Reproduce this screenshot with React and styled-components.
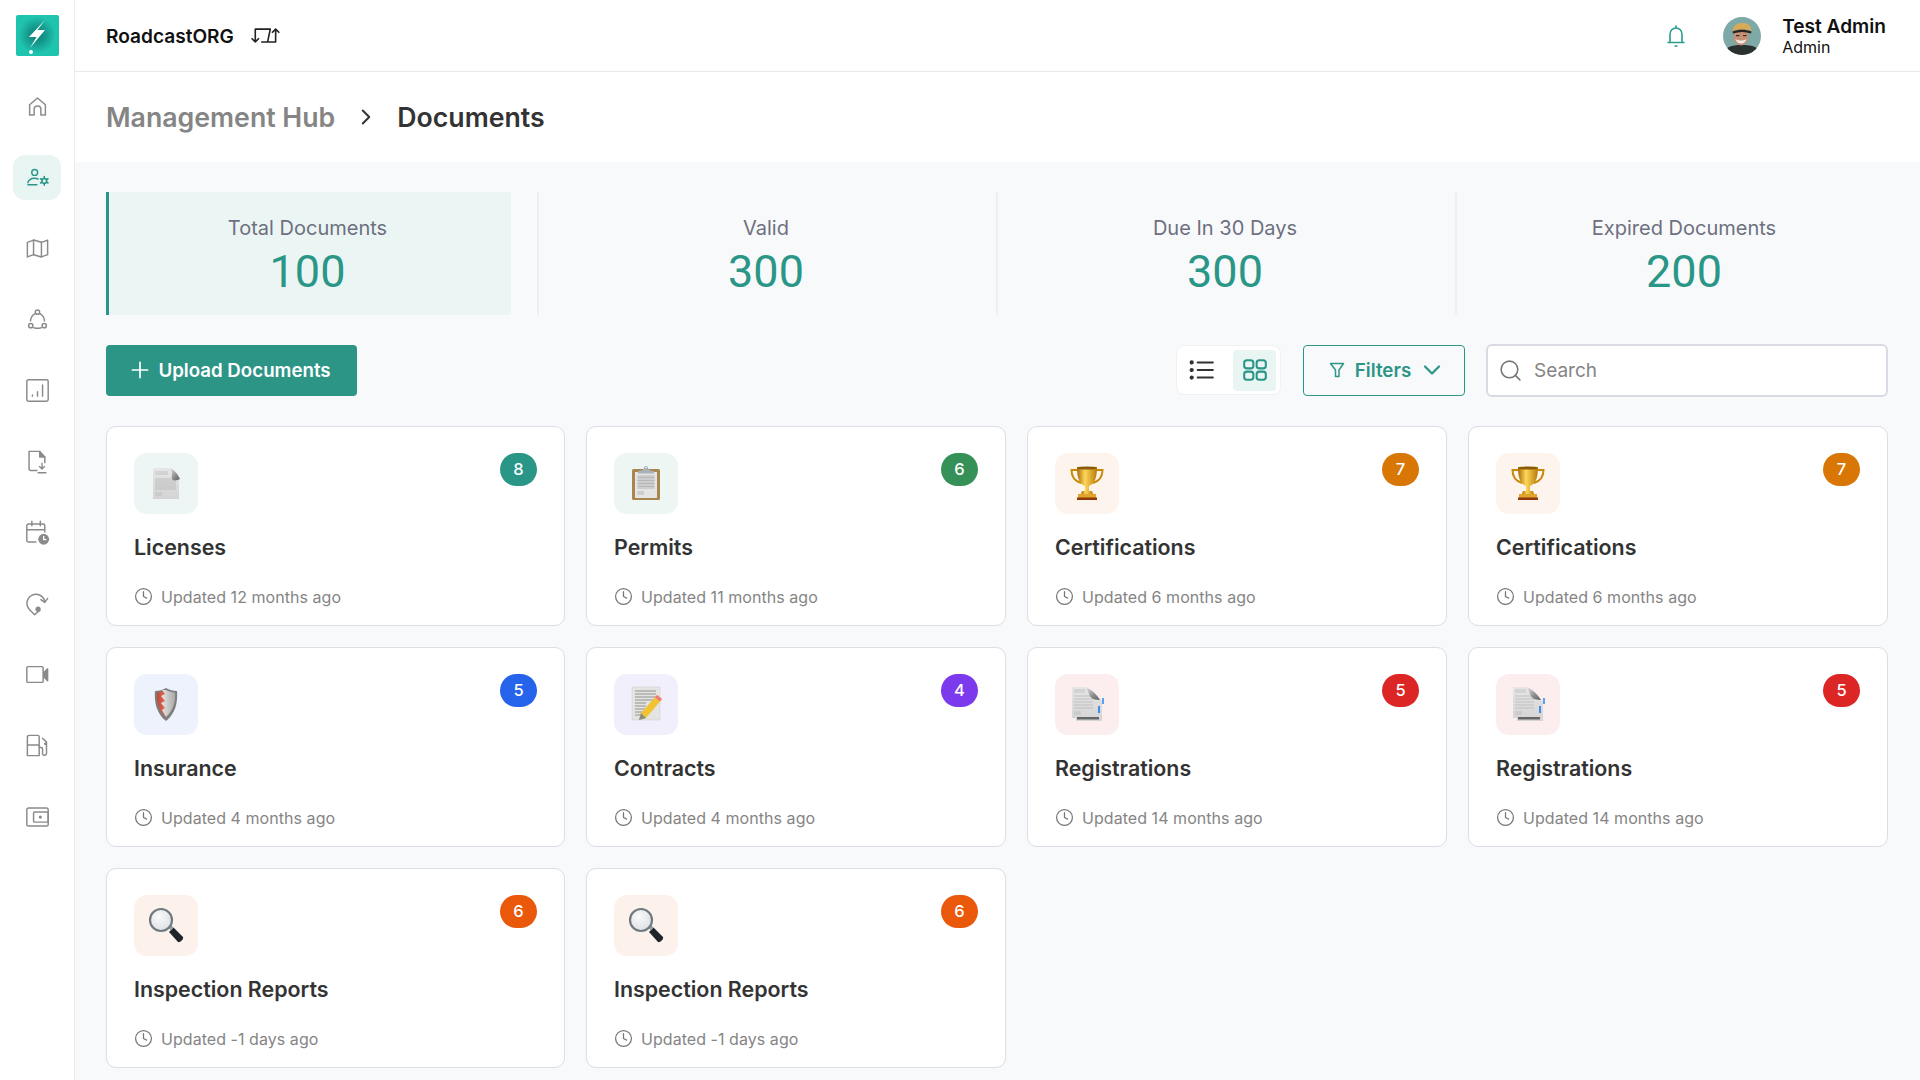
import React from 'react';
import styled, { createGlobalStyle } from 'styled-components';
import { ChevronDown, ChevronRight, Clock, Plus, Search as SearchGlyph } from 'lucide-react';

const Global = createGlobalStyle`
  html, body { margin: 0; padding: 0; height: 100%; overflow: hidden; background: #fff; }
  * { box-sizing: border-box; }
  body { font-family: Inter, "Liberation Sans", sans-serif; }
`;

const Shell = styled.div`display: flex; width: 1920px; height: 1080px; overflow: hidden;`;

const Sidebar = styled.nav`
  width: 75px; flex: none; height: 100%; background: #fff; border-right: 1px solid #ececee;
  display: flex; flex-direction: column; align-items: center; padding-top: 15px;
`;
const LogoBox = styled.div`
  width: 43px; height: 41px; margin-bottom: 23px; border-radius: 2px; overflow: hidden; display: flex;
`;
const NavList = styled.div`display: flex; flex-direction: column; align-items: center; gap: 26px; margin-top: 5px;`;
const NavItem = styled.div`
  width: 48px; height: 45px; border-radius: 12px; display: flex; align-items: center; justify-content: center;
  background: ${p => (p.$active ? '#e9f5f3' : 'transparent')};
  color: ${p => (p.$active ? '#2a9687' : '#8a8a8a')};
`;
const NavSvg = styled.svg`width: 27px; height: 27px; fill: none; stroke: currentColor; stroke-width: 1.3; stroke-linecap: round; stroke-linejoin: round;`;

const Main = styled.div`flex: 1; min-width: 0; display: flex; flex-direction: column;`;
const TopBar = styled.header`
  height: 72px; flex: none; display: flex; align-items: center; justify-content: space-between;
  padding: 0 34px 0 31px; border-bottom: 1px solid #e9e9eb; background: #fff;
`;
const OrgGroup = styled.div`display: flex; align-items: center; gap: 17px;`;
const OrgName = styled.span`font-size: 19.1px; font-weight: 600; color: #111;`;
const SwapSvg = styled.svg`width: 30px; height: 15px; fill: none; stroke: #222; stroke-width: 1.5; stroke-linecap: round; stroke-linejoin: round; overflow: visible;`;
const UserGroup = styled.div`display: flex; align-items: center;`;
const BellSvg = styled.svg`width: 18px; height: 24px; fill: none; stroke: #2a9d8f; stroke-width: 1.6; stroke-linecap: round; margin-right: 38px;`;
const Avatar = styled.svg`width: 38px; height: 38px; border-radius: 50%; margin-right: 21px; flex: none;`;
const UserText = styled.div`display: flex; flex-direction: column; color: #111;`;
const UserName = styled.span`font-size: 19.1px; font-weight: 600; line-height: 23px;`;
const UserRole = styled.span`font-size: 16px; font-weight: 400; line-height: 18px;`;

const PageHead = styled.div`
  height: 90px; flex: none; display: flex; align-items: center; padding-left: 31px; padding-bottom: 1px; background: #fff;
`;
const Crumb = styled.span`font-size: 26.7px; font-weight: 600; color: ${p => (p.$current ? '#333' : '#858585')};`;
const CrumbArrow = styled(ChevronRight)`width: 26px; height: 26px; color: #333; stroke-width: 1.8; margin: 0 18px 0 18px;`;

const Content = styled.main`flex: 1; min-height: 0; background: #f8f9fb; padding: 30px 32px 0 31px;`;
const Stats = styled.section`display: grid; grid-template-columns: 431px repeat(3, 459px); height: 123px; margin-bottom: 29px;`;
const Stat = styled.div`
  height: 100%; display: flex; flex-direction: column; align-items: center; padding-top: 23px;
  ${p => p.$active
    ? 'width: 405px; background: #ebf5f3; border-left: 3px solid #2a9687; padding-right: 5px;'
    : 'border-left: 2px solid #eeeff4; padding-right: 3px;'}
`;
const StatLabel = styled.span`font-size: 20px; line-height: 26px; color: #6d7080;`;
const StatValue = styled.span`font-size: 45px; line-height: 54px; color: #2a9687; margin-top: 4px; font-family: Roboto, Inter, sans-serif;`;

const Toolbar = styled.section`display: flex; align-items: center; height: 52px; margin-bottom: 30px;`;
const UploadButton = styled.button`
  width: 251px; height: 51px; border: 0; border-radius: 4px; background: #2c9586; color: #fff; font: 600 18.7px Inter, sans-serif;
  display: flex; align-items: center; justify-content: center; gap: 5px; padding: 0 5px 0 0; margin-right: auto;
`;
const PlusGlyph = styled(Plus)`width: 26px; height: 26px; stroke-width: 1.6;`;
const ViewToggle = styled.div`
  width: 105px; height: 50px; background: #fff; border: 1px solid #f1f1f4; border-radius: 8px; display: flex; align-items: center;
  justify-content: space-between; padding: 0 4px 0 12px; margin-right: 22px;
`;
const ViewBtn = styled.div`
  width: 43px; height: 41px; border-radius: 4px; display: flex; align-items: center; justify-content: center;
  background: ${p => (p.$active ? '#e9f5f3' : 'transparent')};
  color: ${p => (p.$active ? '#2a9687' : '#333')};
  ${p => !p.$active && 'width: 26px;'}
`;
const ViewSvg = styled.svg`width: 26px; height: 26px; flex: none; fill: none; stroke: currentColor; stroke-width: 1.9; stroke-linecap: round; stroke-linejoin: round;`;
const FilterButton = styled.button`
  width: 162px; height: 51px; border: 1.5px solid #2c9586; border-radius: 4px; background: transparent; color: #2c9586;
  font: 600 18.8px Inter, sans-serif; display: flex; align-items: center; justify-content: center; gap: 7px; padding: 0 0 0 6px; margin-right: 21px;
`;
const FunnelSvg = styled.svg`width: 18px; height: 18px; fill: none; stroke: currentColor; stroke-width: 1.5; stroke-linejoin: round; margin-right: 2px;`;
const FilterChevron = styled(ChevronDown)`width: 28px; height: 28px; stroke-width: 1.9;`;
const SearchBox = styled.div`
  width: 402px; height: 53px; background: #fff; border: 2px solid #d9dae3; border-radius: 6px; display: flex; align-items: center; padding-left: 10px; gap: 11px;
`;
const SearchIcon = styled(SearchGlyph)`width: 25px; height: 25px; color: #777; stroke-width: 1.5;`;
const SearchInput = styled.span`font-size: 19px; color: #858585;`;

const Cards = styled.section`display: grid; grid-template-columns: 459px repeat(3, 1fr); grid-auto-rows: 200px; gap: 21px;`;
const Card = styled.article`
  position: relative; background: #fff; border: 1.5px solid #dcdde5; border-radius: 10px; padding: 25.5px 27px 0;
  display: flex; flex-direction: column;
`;
const IconTile = styled.div`
  width: 64px; height: 61px; border-radius: 13px; background: ${p => p.$bg}; display: flex; align-items: center; justify-content: center;
`;
const EmojiSvg = styled.svg`width: 36px; height: 36px;`;
const Badge = styled.span`
  position: absolute; top: 25.5px; right: 27px; width: 37px; height: 33px; border-radius: 17px; background: ${p => p.$bg};
  color: #fff; font-size: 16.5px; font-weight: 500; display: flex; align-items: center; justify-content: center;
`;
const CardTitle = styled.h3`margin: 20.5px 0 0; font-size: 21.4px; line-height: 26px; font-weight: 600; color: #333;`;
const CardMeta = styled.div`display: flex; align-items: center; gap: 8px; margin-top: 24.5px; color: #858585; font-size: 16px; line-height: 24px; letter-spacing: 0.05px;`;
const ClockGlyph = styled(Clock)`width: 19px; height: 19px; stroke-width: 1.6; color: #777;`;

const Defs = () => (
  <svg width="0" height="0" style={{ position: 'absolute' }}>
    <defs>
      <linearGradient id="gold" x1="0" y1="0" x2="1" y2="0">
        <stop offset="0" stopColor="#a96a05" /><stop offset=".4" stopColor="#ffd75a" /><stop offset="1" stopColor="#b87a08" />
      </linearGradient>
      <linearGradient id="paper" x1="0" y1="0" x2="0" y2="1">
        <stop offset="0" stopColor="#e6e6e6" /><stop offset="1" stopColor="#d4d4d4" />
      </linearGradient>
      <linearGradient id="curl" x1="0" y1="0" x2="1" y2="1">
        <stop offset="0" stopColor="#f0f0f0" /><stop offset=".6" stopColor="#8f8f8f" /><stop offset="1" stopColor="#5f5f5f" />
      </linearGradient>
      <linearGradient id="shieldRed" x1="0" y1="0" x2="1" y2="0">
        <stop offset="0" stopColor="#b84a3a" /><stop offset="1" stopColor="#ee6a55" />
      </linearGradient>
      <linearGradient id="steel" x1="0" y1="0" x2="1" y2="0">
        <stop offset="0" stopColor="#e8e8e8" /><stop offset="1" stopColor="#a9a9a9" />
      </linearGradient>
      <radialGradient id="lens" cx=".4" cy=".35" r=".8">
        <stop offset="0" stopColor="#fafafa" /><stop offset="1" stopColor="#d8dbdd" />
      </radialGradient>
      <radialGradient id="ring" cx=".5" cy=".5" r=".5">
        <stop offset="0" stopColor="#0d7f76" /><stop offset=".45" stopColor="#14998c" /><stop offset=".8" stopColor="#1cb5a3" /><stop offset="1" stopColor="#20c6b0" />
      </radialGradient>
    </defs>
  </svg>
);

const TextLines = ({ x1, x2, ys, color = '#a2a2a2' }) => (
  <g stroke={color} strokeWidth=".7">
    {ys.map(y => <line key={y} x1={x1} x2={x2} y1={y} y2={y} />)}
  </g>
);

const Doc = () => (
  <EmojiSvg viewBox="0 0 36 36">
    <path d="M5 3h16l10 11v20H5z" fill="url(#paper)" />
    <TextLines x1={7} x2={20} ys={[7, 9]} color="#b5b5b5" />
    <TextLines x1={7} x2={28} ys={[14, 16, 18, 20, 22, 24]} color="#b0b0b0" />
    <TextLines x1={7} x2={14} ys={[28, 30]} color="#b5b5b5" />
    <path d="M20 3c3 0 4 3 4 5 0 3-1 5 1 7 2 1 5 0 7-1-2-5-7-10-10-11z" fill="url(#curl)" />
  </EmojiSvg>
);
const Clipboard = () => (
  <EmojiSvg viewBox="0 0 36 36">
    <rect x="4" y="4" width="28" height="31" rx="1.500" fill="#a9854f" />
    <rect x="7" y="7" width="22" height="26" fill="#e4e4e4" />
    <TextLines x1={9.500} x2={26.500} ys={[11, 12.500, 14, 15.500, 17, 18.500, 20, 21.500, 23]} color="#a4a4a4" />
    <TextLines x1={9.500} x2={16} ys={[27, 29]} color="#a4a4a4" />
    <path d="M10 6c4 0 5-1 6-3h4c1 2 2 3 6 3v2.500H10z" fill="#a9b2b8" />
    <circle cx="18" cy="3" r="1.600" fill="none" stroke="#a9b2b8" />
  </EmojiSvg>
);
const Trophy = () => (
  <EmojiSvg viewBox="0 0 36 36">
    <path d="M9 5H2.500c0 6 3 11 9.500 13M27 5h6.500c0 6-3 11-9.500 13" fill="none" stroke="#c98a0a" strokeWidth="2" />
    <path d="M8 2h20c0 10-2 17-8 19v5h-4v-5C10 19 8 12 8 2z" fill="url(#gold)" />
    <ellipse cx="18" cy="3" rx="10" ry="1.600" fill="#8a5a05" />
    <path d="M13 26h10l1 3H12z" fill="url(#gold)" />
    <rect x="9" y="29" width="18" height="5" fill="#e0a52c" />
    <rect x="8" y="32.500" width="20" height="2.500" fill="#8e3a0a" />
  </EmojiSvg>
);
const Shield = () => (
  <EmojiSvg viewBox="0 0 36 36">
    <path d="M7 5c4 0 8-1 11-3 3 2 7 3 11 3 1 12-2 23-11 30C9 28 6 17 7 5z" fill="#7d7d7d" />
    <path d="M9 6.500c3 0 6-1 9-2.500v27C12 26 8 17 9 6.500z" fill="url(#shieldRed)" />
    <path d="M18 4c3 1.500 6 2.500 9 2.500 1 9-2 18-9 24.500l-4-7 3-2-4-5 4-2-4-5 4-2-3-4z" fill="url(#steel)" />
  </EmojiSvg>
);
const Memo = () => (
  <EmojiSvg viewBox="0 0 36 36">
    <rect x="4" y="1" width="28" height="33" fill="#e4e4e2" stroke="#c9c9c7" strokeWidth=".5" />
    <TextLines x1={7} x2={28} ys={[5, 8, 11, 14]} color="#6e6e6e" />
    <TextLines x1={7} x2={18} ys={[17, 20, 23, 26, 29]} color="#6e6e6e" />
    <path d="M29 9l5 4-16 19-7 2 2-7z" fill="#f2c230" />
    <path d="M29 9l5 4-2 2.500-5-4z" fill="#ef7a83" />
    <path d="M13 27l5 5-7 2z" fill="#8a8a8a" />
  </EmojiSvg>
);
const RegDoc = () => (
  <EmojiSvg viewBox="0 0 36 36">
    <path d="M3 1h14l16 14v20H7v-3H3z" fill="url(#paper)" />
    <TextLines x1={5} x2={16} ys={[4, 6]} color="#b5b5b5" />
    <TextLines x1={5} x2={24} ys={[10, 13, 16, 19, 22]} color="#b5b5b5" />
    <TextLines x1={5} x2={12} ys={[26, 28]} color="#b5b5b5" />
    <path d="M15 1c3 0 4 4 5 7 1 3 3 6 11 6-3-5-9-12-16-13z" fill="url(#curl)" />
    <rect x="8" y="31" width="22" height="2.500" fill="#666" />
    <rect x="33" y="12" width="2" height="6" fill="#5aa2ef" />
    <rect x="29" y="20" width="2" height="7" fill="#3d8ee8" />
  </EmojiSvg>
);
const Magnifier = () => (
  <EmojiSvg viewBox="0 0 36 36">
    <path d="M21 25l4.500-4.500 9.500 9.500c1 2-3 6-5 5z" fill="#1c2329" />
    <path d="M20 20l2.500-2.500 3 3-3 3z" fill="#9aa1a6" />
    <circle cx="13" cy="13" r="11" fill="url(#lens)" stroke="#6f7b82" strokeWidth="2.200" />
  </EmojiSvg>
);

const CARDS = [
  { title: 'Licenses', when: '12 months', n: 8, c: '#2a9687', bg: '#eef6f5', Art: Doc },
  { title: 'Permits', when: '11 months', n: 6, c: '#369159', bg: '#eef6f4', Art: Clipboard },
  { title: 'Certifications', when: '6 months', n: 7, c: '#d97706', bg: '#fdf5ed', Art: Trophy },
  { title: 'Certifications', when: '6 months', n: 7, c: '#d97706', bg: '#fdf5ed', Art: Trophy },
  { title: 'Insurance', when: '4 months', n: 5, c: '#2563eb', bg: '#edf2fd', Art: Shield },
  { title: 'Contracts', when: '4 months', n: 4, c: '#7c3aed', bg: '#f2effd', Art: Memo },
  { title: 'Registrations', when: '14 months', n: 5, c: '#dc2626', bg: '#fceeee', Art: RegDoc },
  { title: 'Registrations', when: '14 months', n: 5, c: '#dc2626', bg: '#fceeee', Art: RegDoc },
  { title: 'Inspection Reports', when: '-1 days', n: 6, c: '#ea580c', bg: '#fdf1ec', Art: Magnifier },
  { title: 'Inspection Reports', when: '-1 days', n: 6, c: '#ea580c', bg: '#fdf1ec', Art: Magnifier },
];

const STATS = [
  { label: 'Total Documents', value: 100, active: true },
  { label: 'Valid', value: 300 },
  { label: 'Due In 30 Days', value: 300 },
  { label: 'Expired Documents', value: 200 },
];

const NAV = [
  <><path d="M5 19.500V10.500L12 4.500l7 6V19.500H15v-5a3 3 0 0 0-6 0v5z" /></>,
  <><circle cx="9.500" cy="7.500" r="2.600" /><path d="M12.500 13.300c-1-.4-2.100-.6-3.300-.6-2.800 0-5.700 1.600-5.700 4M3.500 18.500h8" /><circle cx="18" cy="15" r="2.100" strokeWidth="1.400" /><path d="M18 11.200v1.300M18 17.500v1.300M14.700 13.100l1.100.65M20.200 16.250l1.100.65M14.700 16.900l1.100-.65M20.200 13.750l1.100-.65" strokeWidth="1.400" /></>,
  <><path d="M3 6.500l5.500-2 7 2 5.500-2v13l-5.500 2-7-2-5.500 2z" /><path d="M8.500 4.500v13M15.500 6.500v13" /></>,
  <><circle cx="12" cy="5.500" r="1.900" /><circle cx="6" cy="17.500" r="1.900" /><circle cx="18" cy="17.500" r="1.900" /><path d="M8.800 19.300c2 .7 4.400.7 6.400 0M9.800 6.700C7.500 8 6 10.500 5.800 13.200M14.200 6.700c2.300 1.300 3.800 3.800 4 6.500" /></>,
  <><rect x="2.500" y="2.500" width="19" height="19" rx="1.500" /><path d="M7.500 17v-1M12 17v-4M16.500 17V7" /></>,
  <><path d="M11.500 20H6a1.500 1.500 0 0 1-1.500-1.500V3H14l4.500 5V13" /><path d="M14 3V8h4.500" fill="currentColor" /><path d="M16 13.500v5M13.800 16.500l2.200 2.200 2.200-2.200M12.500 22h7" strokeWidth="1.200" /></>,
  <><path d="M10.500 20.500H4A1.500 1.500 0 0 1 2.500 19V6A1.500 1.500 0 0 1 4 4.500h13A1.500 1.500 0 0 1 18.500 6v5.500M2.500 9.500h16M7 2v4M14.500 2v4" /><circle cx="17.500" cy="18" r="4.800" fill="currentColor" stroke="none" /><path d="M17.500 15.500v2.800h2" stroke="#fff" strokeWidth="1.200" /></>,
  <><path d="M18.500 10.500A8 8 0 1 0 5 17.500l4.500 4.500c1.500-1.500 3-2.500 4.500-4" /><path d="M21 7.500l-2.500 3.500-3.500-2.500" /><circle cx="12.500" cy="17" r="2.300" fill="currentColor" stroke="none" /></>,
  <><rect x="2.500" y="5" width="14.500" height="14" rx="1" /><path d="M21 7L17.500 10.500v3.500L21 17.500z" fill="currentColor" /></>,
  <><path d="M3 21V4.500A1.500 1.500 0 0 1 4.500 3H12a1.500 1.500 0 0 1 1.500 1.500V21zM3 11.500h10.500" /><path d="M16.500 5.500l3.500 3.500v10a1.800 1.800 0 0 1-3.500.5V15c0-1-1-1.500-3-1.500" /><circle cx="19" cy="10.500" r=".6" /></>,
  <><rect x="2.500" y="4.500" width="19" height="16" rx="1.500" /><rect x="8.500" y="8" width="13" height="9" rx="1" /><circle cx="14.500" cy="12.500" r="1.400" fill="currentColor" stroke="none" /></>,
];

const Logo = () => (
  <svg viewBox="0 0 43 41" width="43" height="41">
    <rect width="43" height="41" fill="#1fc4ae" />
    <circle cx="21" cy="20" r="19" fill="url(#ring)" />
    <path d="M29 5L13 22h7.500L14 33l15-18h-7.500z" fill="#fff" />
    <circle cx="15" cy="37" r="2" fill="#fff" />
  </svg>
);

const AvatarArt = () => (
  <Avatar viewBox="0 0 38 38">
    <rect width="38" height="38" fill="#7fa9a6" />
    <path d="M0 38c2-8 8-10 19-10s17 2 19 10z" fill="#2a312f" />
    <ellipse cx="18" cy="20" rx="7.500" ry="8.500" fill="#c49176" />
    <path d="M12.500 22c3 2 8 2 11 0-1 3-3 4.500-5.500 4.500S13.500 25 12.500 22z" fill="#f3ece5" />
    <path d="M10 12c1-4 5-6 9-6s8 1 9 5l.5 3c-6-2.500-13-2.500-18.500 0z" fill="#d7aa58" />
    <path d="M9.500 14.500c6-2.200 13-2.200 19 0l-.5 2c-6-2-12-2-18 0z" fill="#2a2420" />
    <rect x="13" y="18" width="3.500" height="1.200" fill="#3a2a20" />
    <rect x="20" y="18" width="3.500" height="1.200" fill="#3a2a20" />
  </Avatar>
);

export default function App() {
  return (
    <Shell>
      <Global />
      <Defs />
      <Sidebar>
        <LogoBox><Logo /></LogoBox>
        <NavList>
          {NAV.map((art, i) => (
            <NavItem key={i} $active={i === 1}>
              <NavSvg viewBox="0 0 24 24">{art}</NavSvg>
            </NavItem>
          ))}
        </NavList>
      </Sidebar>
      <Main>
        <TopBar>
          <OrgGroup>
            <OrgName>RoadcastORG</OrgName>
            <SwapSvg viewBox="0 0 28 14">
              <path d="M4 1v12M1 10l3 3 3-3M4 1h14l-2.500 12M10 13h13M23 13V1M20 4l3-3 3 3" />
            </SwapSvg>
          </OrgGroup>
          <UserGroup>
            <BellSvg viewBox="0 0 18 24">
              <path d="M3 18V10a6 6 0 0 1 12 0v8M1 18.500h16M9 2v2M8 22h2" />
            </BellSvg>
            <AvatarArt />
            <UserText>
              <UserName>Test Admin</UserName>
              <UserRole>Admin</UserRole>
            </UserText>
          </UserGroup>
        </TopBar>
        <PageHead>
          <Crumb>Management Hub</Crumb>
          <CrumbArrow />
          <Crumb $current>Documents</Crumb>
        </PageHead>
        <Content>
          <Stats>
            {STATS.map(s => (
              <Stat key={s.label} $active={s.active}>
                <StatLabel>{s.label}</StatLabel>
                <StatValue>{s.value}</StatValue>
              </Stat>
            ))}
          </Stats>
          <Toolbar>
            <UploadButton><PlusGlyph />Upload Documents</UploadButton>
            <ViewToggle>
              <ViewBtn>
                <ViewSvg viewBox="0 0 24 24">
                  <path d="M8 5h14M8 12h14M8 19h14" />
                  <circle cx="2.500" cy="5" r="1" fill="currentColor" />
                  <circle cx="2.500" cy="12" r="1" fill="currentColor" />
                  <circle cx="2.500" cy="19" r="1" fill="currentColor" />
                </ViewSvg>
              </ViewBtn>
              <ViewBtn $active>
                <ViewSvg viewBox="0 0 24 24">
                  <rect x="2" y="3" width="8.500" height="7.500" rx="2.500" />
                  <rect x="13.500" y="3" width="8.500" height="7.500" rx="2.500" />
                  <rect x="2" y="13.500" width="8.500" height="7.500" rx="2.500" />
                  <rect x="13.500" y="13.500" width="8.500" height="7.500" rx="2.500" />
                </ViewSvg>
              </ViewBtn>
            </ViewToggle>
            <FilterButton>
              <FunnelSvg viewBox="0 0 18 18"><path d="M2.500 2.500h13L11 9v6.500H7.500V9z" /></FunnelSvg>
              Filters
              <FilterChevron />
            </FilterButton>
            <SearchBox>
              <SearchIcon />
              <SearchInput>Search</SearchInput>
            </SearchBox>
          </Toolbar>
          <Cards>
            {CARDS.map((c, i) => (
              <Card key={i}>
                <IconTile $bg={c.bg}><c.Art /></IconTile>
                <Badge $bg={c.c}>{c.n}</Badge>
                <CardTitle>{c.title}</CardTitle>
                <CardMeta><ClockGlyph />Updated {c.when} ago</CardMeta>
              </Card>
            ))}
          </Cards>
        </Content>
      </Main>
    </Shell>
  );
}
